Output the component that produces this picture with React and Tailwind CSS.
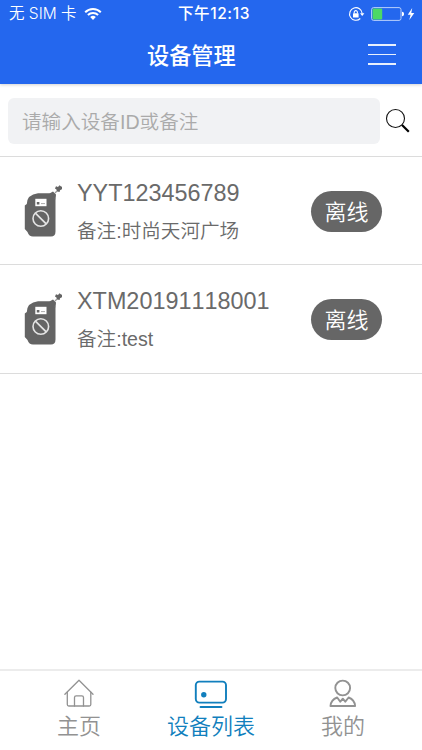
import React, { useState } from 'react';

const devices = [
    { id: 'YYT123456789', remark: '时尚天河广场' },
    { id: 'XTM20191118001', remark: 'test' },
];

const WifiIcon = () => (
    <svg width="18" height="14" viewBox="0 0 18 14" fill="none" stroke="#fff" strokeWidth="2">
        <path d="M1.2 5.2a11 11 0 0 1 15.6 0" />
        <path d="M3.9 8a7.2 7.2 0 0 1 10.2 0" />
        <path d="M9 12.9 6.2 10.1a4 4 0 0 1 5.6 0z" fill="#fff" stroke="none" />
    </svg>
);

const RotationLockIcon = () => (
    <svg width="17" height="16" viewBox="0 0 17 16" fill="none" stroke="#fff">
        <path d="M14.2 7.5A6.3 6.3 0 1 0 12.3 12.5" strokeWidth="1.1" />
        <path d="M12 7.2h4.4l-2.2 2.8z" fill="#fff" stroke="none" />
        <rect x="5" y="7.2" width="5.6" height="4.4" rx="0.5" fill="#fff" stroke="none" />
        <path d="M6.2 7.4V6.2a1.6 1.6 0 0 1 3.2 0v1.2" strokeWidth="1.1" />
    </svg>
);

const BatteryIcon = () => (
    <svg width="44" height="14" viewBox="0 0 44 14">
        <rect x="0.6" y="0.6" width="29.4" height="12.8" rx="2" fill="none" stroke="#b9cffb" strokeWidth="1" />
        <rect x="1.6" y="1.6" width="9.6" height="10.8" rx="0.8" fill="#4cd964" />
        <path d="M31 4.8c1.6.2 2 1.2 2 2.2s-.4 2-2 2.2z" fill="#fff" />
        <path d="M41.2 1 36.8 7.8h2.8L38.3 13l5-7h-3z" fill="#fff" />
    </svg>
);

const SearchIcon = () => (
    <svg width="26" height="26" viewBox="0 0 26 26" fill="none" stroke="#111">
        <circle cx="10.5" cy="10.5" r="9" strokeWidth="1.1" />
        <path d="M17 17l6.8 6.8" stroke="#000" strokeWidth="2.2" />
    </svg>
);

// 设备图标
const DeviceIcon = () => (
    <svg width="40" height="53" viewBox="0 0 40 53" className="shrink-0">
        <path
            d="M16 8.2H28.5L33.5 14V46.5Q33.5 51.500 29 51.500H11Q7 51.500 5.500 47L2.800 44V20.500L4.800 19Q5 9.500 16 8.200Z"
            fill="#646464"
        />
        <path d="M27.5 8.5l3.5-2 3 3-.5 5z" fill="#646464" />
        <path d="M33 8l3-3" stroke="#9a9a9a" strokeWidth="1.3" />
        <path
            d="M34 1.2l2 .7L37.500.2l1.600 1.400 1.400.4-.6 2.300-1.900 1-.4 1.600-2.300-.4-.9-2-1.400-1z"
            fill="#646464"
        />
        <rect x="13.3" y="13.8" width="11.2" height="7.4" fill="#fff" />
        <rect x="14.8" y="17" width="2.6" height="2.5" fill="#646464" />
        <path d="M19 18.600h4" stroke="#aaa" strokeWidth="1" />
        <circle cx="18.8" cy="33.5" r="7.8" fill="none" stroke="#e4e4e4" strokeWidth="1.6" />
        <path d="M13.4 28.1l10.800 10.800" stroke="#e4e4e4" strokeWidth="1.7" />
    </svg>
);

const HomeIcon = () => (
    <svg width="30" height="30" viewBox="0 0 30 30" fill="none" stroke="currentColor" strokeWidth="1.3" strokeLinejoin="round" strokeLinecap="round">
        <path d="M.9 15.2 15 1.2l14 14" />
        <path d="M3.3 13.2v12.3q0 1.5 1.5 1.5h20.5q1.5 0 1.5-1.5V13.2" />
        <path d="M10.5 27v-8.5q0-1.7 1.7-1.7h5.6q1.7 0 1.7 1.7V27" />
    </svg>
);

const DeviceListIcon = () => (
    <svg width="34" height="30" viewBox="0 0 34 30" fill="none" stroke="currentColor" strokeWidth="1.9" strokeLinecap="round">
        <rect x="1.8" y="2.6" width="30.2" height="21" rx="3.5" />
        <path d="M6.500 28h21" />
        <circle cx="9.8" cy="15.8" r="2.7" fill="currentColor" stroke="none" />
    </svg>
);

const MineIcon = () => (
    <svg width="30" height="30" viewBox="0 0 30 30" fill="none" stroke="currentColor" strokeWidth="1.9" strokeLinejoin="round">
        <circle cx="14.7" cy="9" r="7.4" />
        <path d="M9.2 18.500Q2.800 21 2.500 27h24.600q-.3-6-6.500-8.500L17.300 22.700l-2.500-3-2.500 3z" />
    </svg>
);

const tabs = [
    { key: 'home', label: '主页', Icon: HomeIcon },
    { key: 'list', label: '设备列表', Icon: DeviceListIcon },
    { key: 'mine', label: '我的', Icon: MineIcon },
];

const DeviceRow = ({ device }) => (
    <li className="flex h-[108.3px] items-center border-b border-[#dcdcdc] pl-[22px] pr-10 pt-[2px]">
        <DeviceIcon />
        <div className="ml-[15px] flex-1 text-[#6a6a6a]">
            <div className="pt-px text-[23.4px] leading-[36px] [font-kerning:none]">{device.id}</div>
            <div className="mt-[2px] text-[19.6px] leading-[36px]">备注:{device.remark}</div>
        </div>
        <span className="flex h-[41px] w-[71px] items-center justify-center rounded-full bg-[#666] pt-0.5 text-[22px] leading-none text-white">
            离线
        </span>
    </li>
);

const App = () => {
    const [keyword, setKeyword] = useState('');
    const [activeTab, setActiveTab] = useState('list');

    return (
        <div className="flex h-screen w-full flex-col bg-white font-['Liberation_Sans','Noto_Sans_CJK_SC',sans-serif] font-[350]">
            {/* 状态栏 + 标题 */}
            <header className="z-10 h-[84px] shrink-0 bg-[#2467ee] text-white shadow-[0_1px_3px_rgba(0,0,0,0.18)]">
                <div className="grid h-7 grid-cols-3 items-center pl-[9px] pr-[7px] font-['Inter','Noto_Sans_CJK_SC',sans-serif] text-[15.5px] leading-7">
                    <div className="flex items-center gap-[7px] whitespace-nowrap">
                        <span>无 SIM 卡</span>
                        <WifiIcon />
                    </div>
                    <span className="pl-1 text-center font-medium tracking-[0.6px]">下午12:13</span>
                    <div className="flex items-center justify-end gap-1.5">
                        <RotationLockIcon />
                        <BatteryIcon />
                    </div>
                </div>
                <div className="flex h-14 items-center justify-between pl-[147px] pr-[26px]">
                    <h1 className="pt-0.5 text-[22.2px] font-medium leading-8">设备管理</h1>
                    <button className="mb-[3px] flex flex-col gap-2">
                        <i className="h-[1.5px] w-7 bg-white/90" />
                        <i className="h-[1.5px] w-7 bg-white/90" />
                        <i className="h-[1.5px] w-7 bg-white/90" />
                    </button>
                </div>
            </header>

            {/* 搜索 */}
            <div className="flex h-[73px] shrink-0 items-center border-b border-[#dcdcdc] pl-2 pr-[11px] pt-[2px]">
                <input
                    className="h-[46px] w-[372px] rounded-md bg-[#f1f2f4] px-3.5 pt-0.5 text-[19.6px] text-[#646464] outline-none placeholder:text-[#aaa]"
                    placeholder="请输入设备ID或备注"
                    value={keyword}
                    onChange={e => setKeyword(e.target.value)}
                />
                <button className="ml-[5px]">
                    <SearchIcon />
                </button>
            </div>

            {/* 设备列表 */}
            <ul className="flex-1">
                {devices.filter(d => d.id.includes(keyword) || d.remark.includes(keyword)).map(d => (
                    <DeviceRow key={d.id} device={d} />
                ))}
            </ul>

            {/* 底部导航 */}
            <nav className="flex h-[81px] shrink-0 border-t-2 border-[#ececec] px-[13px]">
                {tabs.map(({ key, label, Icon }) => (
                    <button
                        key={key}
                        onClick={() => setActiveTab(key)}
                        className={`flex flex-1 flex-col items-center pt-2 ${activeTab === key ? 'text-[#117fbd]' : 'text-[#929292]'}`}
                    >
                        <Icon />
                        <span className="mt-0.5 text-[22px] leading-[32px]">{label}</span>
                    </button>
                ))}
            </nav>
        </div>
    );
};

export default App;
